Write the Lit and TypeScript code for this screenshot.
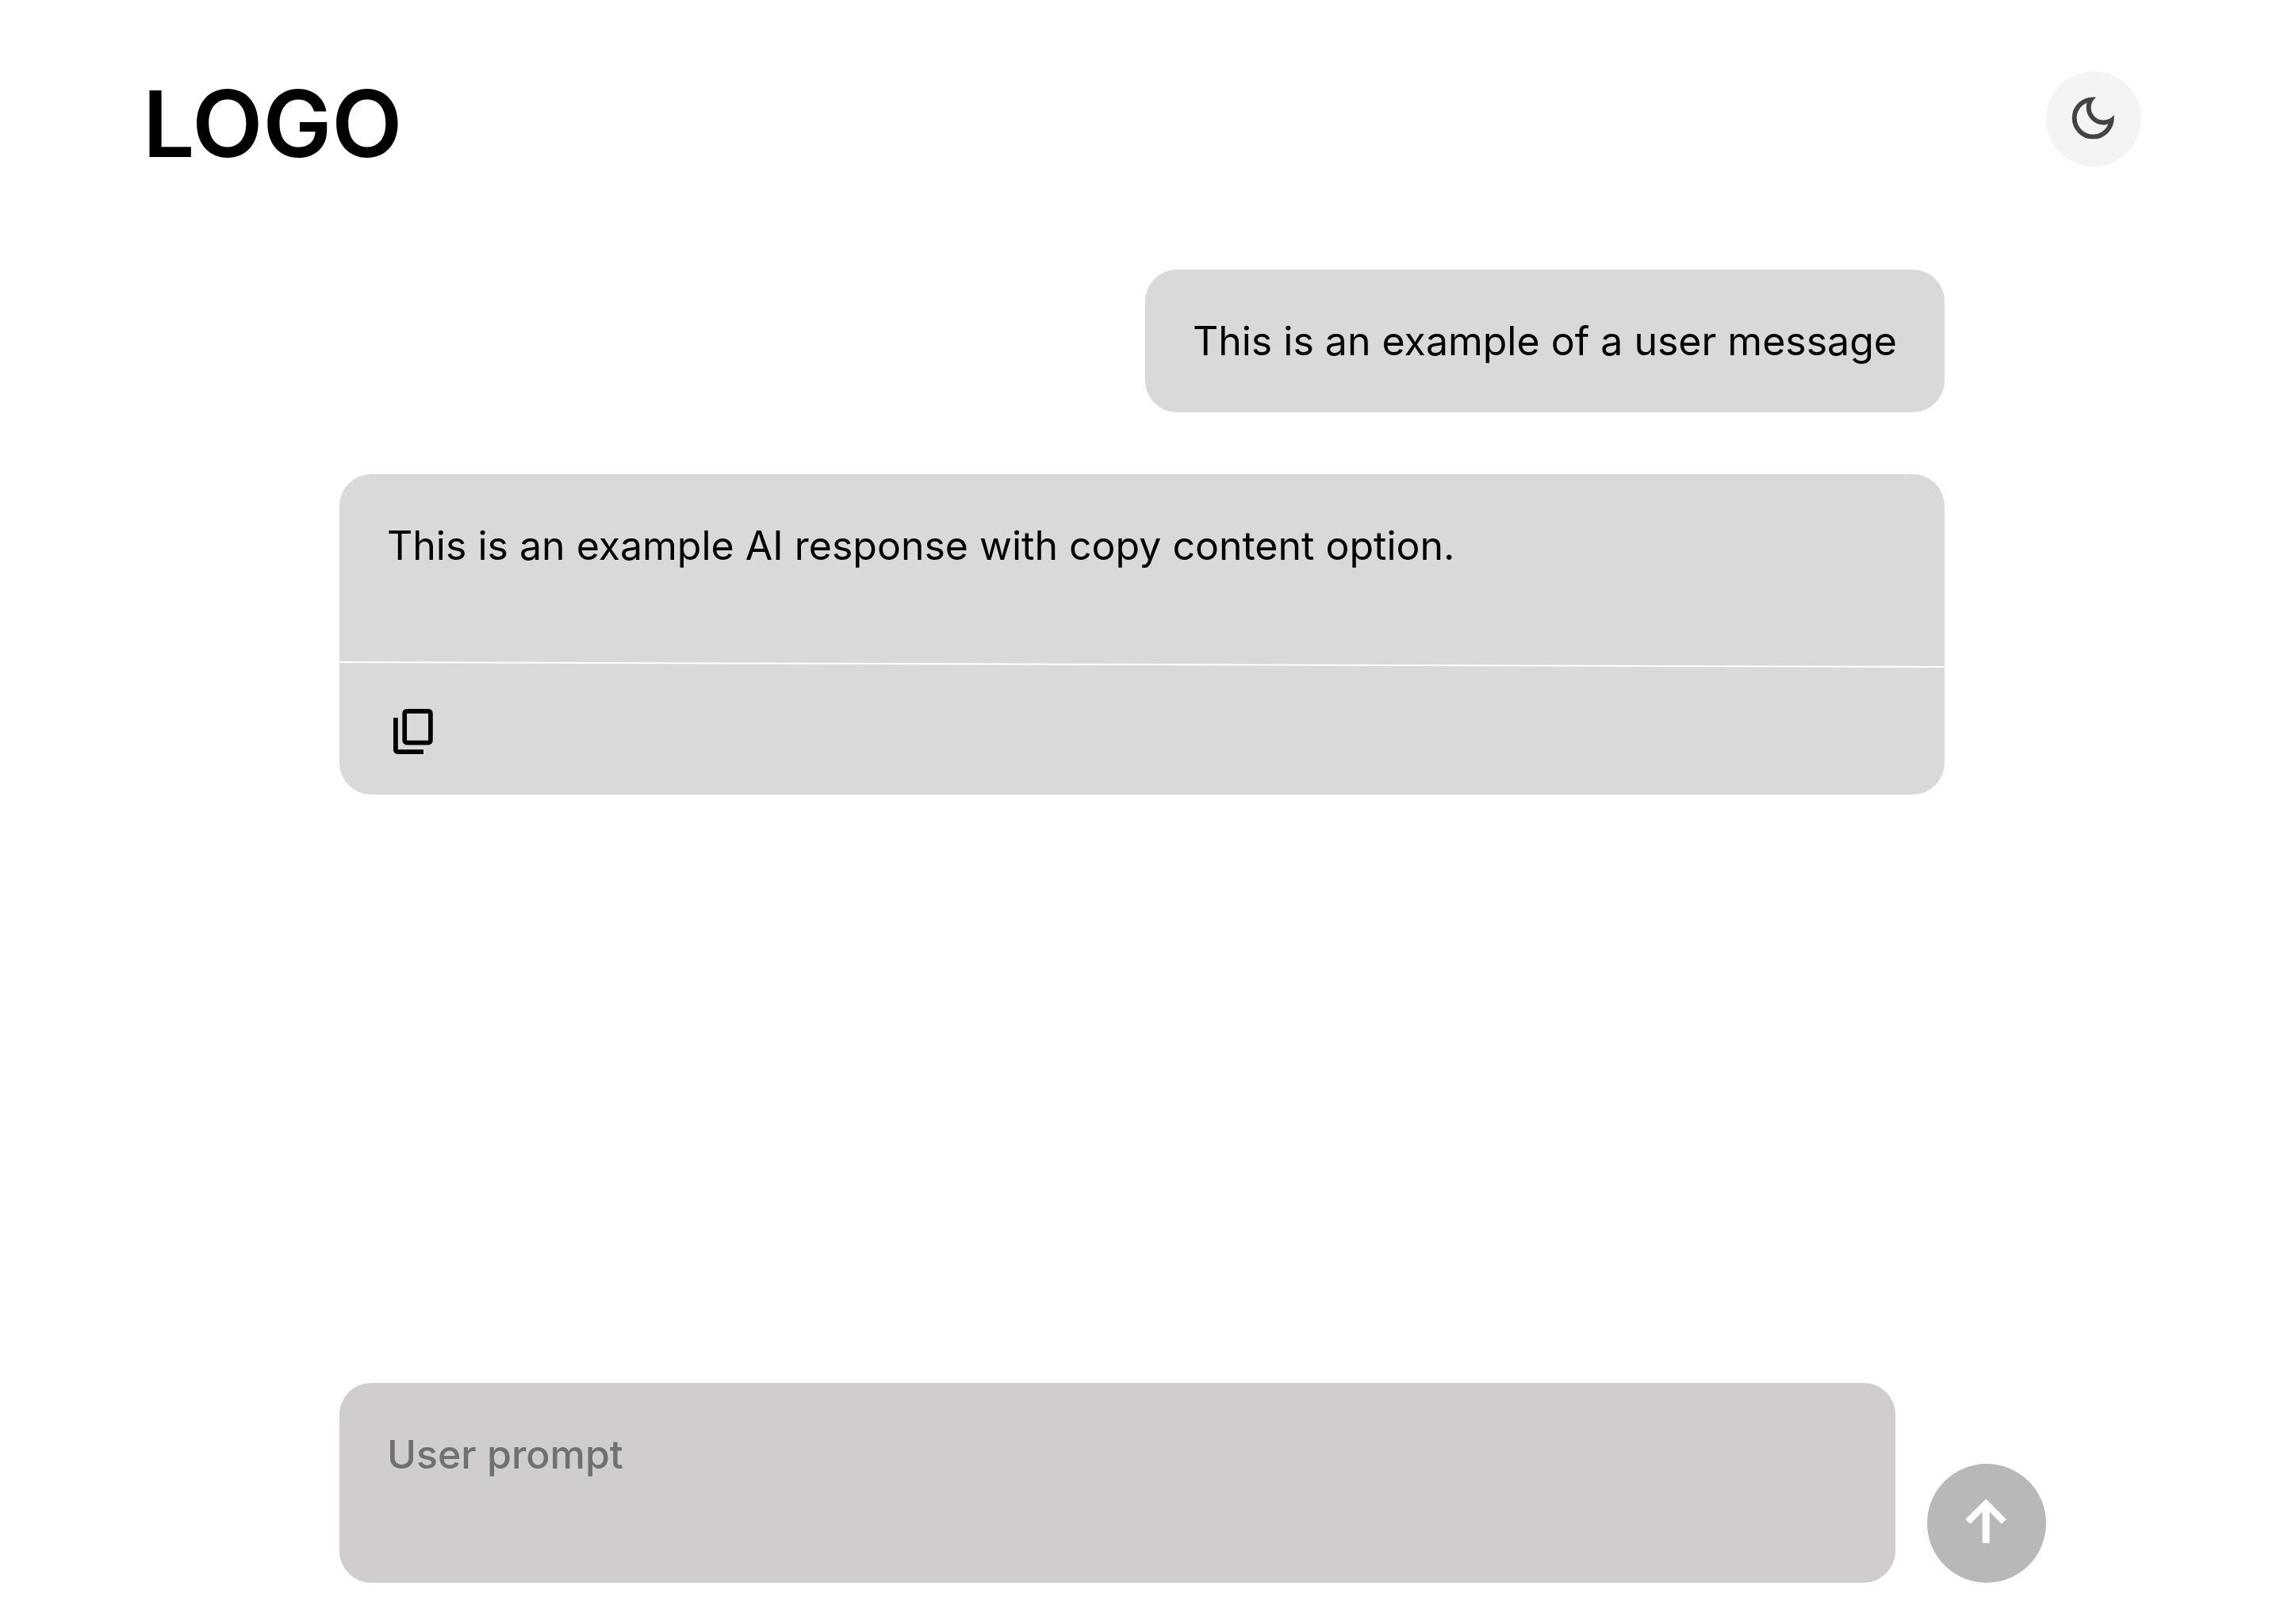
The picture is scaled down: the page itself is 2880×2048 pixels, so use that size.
import { LitElement, html, css, svg } from "lit";
import { customElement, state } from "lit/decorators.js";

const moonIcon = svg`
  <svg class="glyph" viewBox="0 0 120 120" aria-hidden="true">
    <path fill="#434343" transform="translate(23.9 94.2) scale(.0736)" d="M480-120q-150 0-255-105T120-480q0-150 105-255t255-105q14 0 27.500 1t26.500 3q-41 29-65.500 75.500T444-660q0 90 63 153t153 63q55 0 101-24.500t75-65.500q2 13 3 26.500t1 27.500q0 150-105 255T480-120Zm0-80q88 0 158-48.500T740-375q-20 5-40 8t-40 3q-123 0-209.500-86.500T364-660q0-20 3-40t8-40q-78 32-126.500 102T200-480q0 116 82 198t198 82Z"/>
  </svg>`;

const copyIcon = svg`
  <svg class="glyph" viewBox="0 0 50 57" aria-hidden="true">
    <rect x="14.200" y="2.800" width="32.700" height="39.800" rx="2.800" fill="none" stroke="#000" stroke-width="5.700"/>
    <path d="M0 11.300H5.800V51.200H38V57H5.700Q0 57 0 51.300Z"/>
  </svg>`;

const sendIcon = svg`
  <svg class="glyph" viewBox="0 0 150 150" aria-hidden="true">
    <path fill="#fff" d="M74.200 44.300 99.800 70 93.700 75.700 78.700 60.500V100H69.700V60.500L54.500 75.700 48.300 70Z"/>
  </svg>`;

@customElement("app-root")
export class AppRoot extends LitElement {
  @state() private prompt = "";

  static styles = css`
    :host {
      display: block;
      font-family: Inter, "Liberation Sans", sans-serif;
      font-size: 50px;
      line-height: 60px;
      color: #000;
      background: #fff;
    }
    .page {
      min-height: 100vh;
      display: flex;
      flex-direction: column;
      box-sizing: border-box;
    }
    .header {
      display: flex;
      justify-content: space-between;
      align-items: flex-start;
      padding: 90px 180px 0;
    }
    .logo {
      margin: 0;
      font-size: 116px;
      font-weight: 600;
      line-height: 132px;
    }
    button {
      padding: 0;
      border: 0;
      background: none;
      cursor: pointer;
    }
    .glyph {
      display: block;
      width: 100%;
      height: 100%;
    }
    .theme {
      width: 120px;
      height: 120px;
      border-radius: 50%;
      background: #f4f4f4;
    }
    .messages {
      flex: 1;
      display: flex;
      flex-direction: column;
      gap: 78px;
      padding: 118px 428px 78px;
    }
    .card {
      border-radius: 40px;
      background: #d9d9d9;
    }
    .card p {
      margin: 0;
    }
    .user {
      align-self: flex-end;
      padding: 60px;
    }
    .answer {
      padding: 60px 60px 116px;
    }
    .divider {
      display: block;
      width: 100%;
      height: 8px;
    }
    .actions {
      display: flex;
      padding: 52px 68px 51px;
    }
    .copy {
      width: 50px;
      height: 57px;
    }
    .composer {
      display: flex;
      align-items: flex-end;
      gap: 40px;
      padding: 0 300px 52px 428px;
    }
    .prompt {
      flex: 1;
      min-width: 0;
      height: 252px;
      box-sizing: border-box;
      padding: 60px;
      border: 0;
      border-radius: 40px;
      resize: none;
      overflow: hidden;
      outline: none;
      font: inherit;
      font-weight: 500;
      color: #000;
      background: #d1cdcc;
    }
    .prompt::placeholder {
      color: #707070;
      opacity: 1;
    }
    .send {
      flex: none;
      width: 150px;
      height: 150px;
      border-radius: 50%;
      background: #b8b8b8;
    }
    @media (max-width: 1600px) {
      .header,
      .messages,
      .composer {
        padding-left: 60px;
        padding-right: 60px;
      }
    }
  `;

  private onInput(e: Event) {
    this.prompt = (e.target as HTMLTextAreaElement).value;
  }

  render() {
    return html`
      <div class="page">
        <header class="header">
          <h1 class="logo">LOGO</h1>
          <button class="theme" type="button" aria-label="Dark mode">${moonIcon}</button>
        </header>
        <main class="messages">
          <article class="card user"><p>This is an example of a user message</p></article>
          <article class="card">
            <p class="answer">This is an example AI response with copy content option.</p>
            <svg class="divider" viewBox="0 0 2024 8" preserveAspectRatio="none" aria-hidden="true">
              <line x1="0" y1="1" x2="2024" y2="7" stroke="#fff" stroke-width="2" />
            </svg>
            <div class="actions">
              <button class="copy" type="button" aria-label="Copy">${copyIcon}</button>
            </div>
          </article>
        </main>
        <form class="composer" @submit=${(e: Event) => e.preventDefault()}>
          <textarea class="prompt" aria-label="User prompt" placeholder="User prompt"
            .value=${this.prompt} @input=${this.onInput}></textarea>
          <button class="send" type="submit" aria-label="Send">${sendIcon}</button>
        </form>
      </div>
    `;
  }
}
